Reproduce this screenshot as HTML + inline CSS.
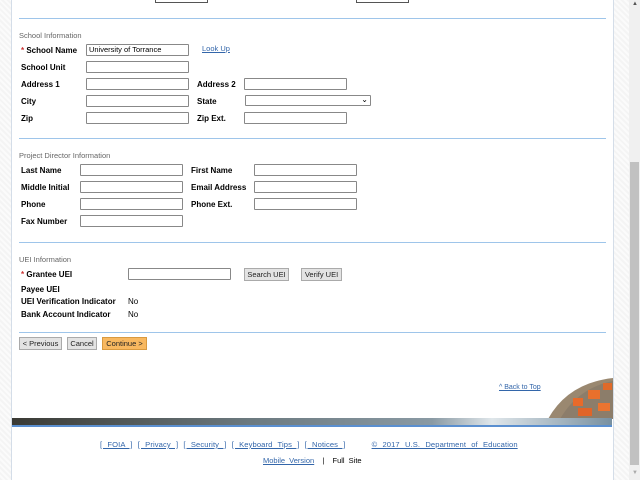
<!DOCTYPE html>
<html><head><style>
body{margin:0;width:640px;height:480px;position:relative;overflow:hidden;background:#fff;font-family:"Liberation Sans",Verdana,sans-serif;font-size:8px;color:#000}
.pat{position:absolute;top:0;height:480px;background:repeating-linear-gradient(45deg,#f4f4f4 0 2px,#fbfbfb 2px 4px)}
.a{position:absolute;white-space:nowrap}
.l{position:absolute;font-weight:bold;font-size:8px;white-space:nowrap}
.h{position:absolute;color:#666;font-size:7.5px}
.i{position:absolute;height:10px;border:1px solid #888;background:#fff;border-radius:1px;width:101px}
.hr{position:absolute;left:19px;width:587px;height:1px;background:#9ec5ea}
.b{position:absolute;height:11px;border:1px solid #aaa;background:#e3e3e3;font-size:7.5px;line-height:11px;text-align:center;color:#222}
a,.u{color:#3366aa;text-decoration:underline}
.r{color:#c33}
</style></head><body>
<div class="pat" style="left:0;width:11px"></div>
<div class="pat" style="left:613px;width:16px;border-left:1px solid #d4dde8"></div>
<div style="position:absolute;left:11px;top:0;width:1px;height:480px;background:#d4dde8"></div>
<div style="position:absolute;left:629px;top:0;width:11px;height:480px;background:#f0f0f0"></div>
<div style="position:absolute;left:630px;top:162px;width:9px;height:303px;background:#c1c1c1"></div>
<div class="a" style="left:632px;top:1px;font-size:6px;color:#555">▲</div>
<div class="a" style="left:632px;top:470px;font-size:6px;color:#aaa">▼</div>
<div style="position:absolute;left:155px;top:-2px;width:51px;height:3px;border:1px solid #555"></div>
<div style="position:absolute;left:356px;top:-2px;width:51px;height:3px;border:1px solid #555"></div>
<div class="hr" style="top:18px"></div>
<div class="h" style="left:19px;top:31px">School Information</div>
<div class="l" style="left:21px;top:46px"><span class="r">*</span> School Name</div>
<div class="i" style="left:86px;top:44px;font-size:7.5px;line-height:10px;padding-left:2px;width:99px">University of Torrance</div>
<div class="a u" style="left:202px;top:44px;font-size:7.5px">Look Up</div>
<div class="l" style="left:21px;top:63px">School Unit</div><div class="i" style="left:86px;top:61px"></div>
<div class="l" style="left:21px;top:80px">Address 1</div><div class="i" style="left:86px;top:78px"></div>
<div class="l" style="left:197px;top:80px">Address 2</div><div class="i" style="left:244px;top:78px"></div>
<div class="l" style="left:21px;top:97px">City</div><div class="i" style="left:86px;top:95px"></div>
<div class="l" style="left:197px;top:97px">State</div><div class="i" style="left:245px;top:95px;width:124px;height:9px"><span style="position:absolute;right:2px;top:-1px;font-size:8px">⌄</span></div>
<div class="l" style="left:21px;top:114px">Zip</div><div class="i" style="left:86px;top:112px"></div>
<div class="l" style="left:197px;top:114px">Zip Ext.</div><div class="i" style="left:244px;top:112px"></div>
<div class="hr" style="top:138px"></div>
<div class="h" style="left:19px;top:151px">Project Director Information</div>
<div class="l" style="left:21px;top:166px">Last Name</div><div class="i" style="left:80px;top:164px"></div>
<div class="l" style="left:191px;top:166px">First Name</div><div class="i" style="left:254px;top:164px"></div>
<div class="l" style="left:21px;top:183px">Middle Initial</div><div class="i" style="left:80px;top:181px"></div>
<div class="l" style="left:191px;top:183px">Email Address</div><div class="i" style="left:254px;top:181px"></div>
<div class="l" style="left:21px;top:200px">Phone</div><div class="i" style="left:80px;top:198px"></div>
<div class="l" style="left:191px;top:200px">Phone Ext.</div><div class="i" style="left:254px;top:198px"></div>
<div class="l" style="left:21px;top:217px">Fax Number</div><div class="i" style="left:80px;top:215px"></div>
<div class="hr" style="top:242px"></div>
<div class="h" style="left:19px;top:255px">UEI Information</div>
<div class="l" style="left:21px;top:270px"><span class="r">*</span> Grantee UEI</div><div class="i" style="left:128px;top:268px"></div>
<div class="b" style="left:244px;top:268px;width:43px">Search UEI</div>
<div class="b" style="left:301px;top:268px;width:39px">Verify UEI</div>
<div class="l" style="left:21px;top:285px">Payee UEI</div>
<div class="l" style="left:21px;top:297px">UEI Verification Indicator</div><div class="a" style="left:128px;top:297px">No</div>
<div class="l" style="left:21px;top:310px">Bank Account Indicator</div><div class="a" style="left:128px;top:310px">No</div>
<div class="hr" style="top:332px"></div>
<div class="b" style="left:19px;top:337px;width:41px">&lt; Previous</div>
<div class="b" style="left:67px;top:337px;width:28px">Cancel</div>
<div class="b" style="left:102px;top:337px;width:43px;background:#f8b860;border-color:#d99a40">Continue &gt;</div>
<div class="a u" style="left:499px;top:384px;font-size:7px">^ Back to Top</div>
<svg style="position:absolute;left:548px;top:378px" width="65" height="41"><path d="M65 0 Q20 5 0 41 H65Z" fill="#9a8870"/><path d="M65 3 Q30 10 12 41 H65Z" fill="#8c7d6a"/><rect x="25" y="20" width="10" height="8" fill="#e86a2a"/><rect x="40" y="12" width="12" height="9" fill="#e8702c"/><rect x="30" y="30" width="14" height="8" fill="#e06428"/><rect x="50" y="25" width="12" height="8" fill="#ea7430"/><rect x="55" y="5" width="9" height="7" fill="#e06a2a"/></svg>
<div style="position:absolute;left:12px;top:418px;width:600px;height:7px;background:linear-gradient(90deg,#3a3a34,#6c7a80 40%,#8a9aa4 70%,#dfe6ea 80%,#7890a0)"></div>
<div style="position:absolute;left:12px;top:425px;width:600px;height:2px;background:#5a8fd0"></div>
<div class="a" style="left:100px;top:440px;font-size:7.6px;color:#3366aa;word-spacing:3px;letter-spacing:0.1px"><span class="u">[ FOIA ]</span> <span class="u">[ Privacy ]</span> <span class="u">[ Security ]</span> <span class="u">[ Keyboard Tips ]</span> <span class="u">[ Notices ]</span> &nbsp;&nbsp;&nbsp; <span class="u">© 2017 U.S. Department of Education</span></div>
<div class="a" style="left:263px;top:456px;font-size:7.5px;word-spacing:2px"><span class="u">Mobile Version</span> &nbsp;|&nbsp; Full Site</div>
</body></html>
